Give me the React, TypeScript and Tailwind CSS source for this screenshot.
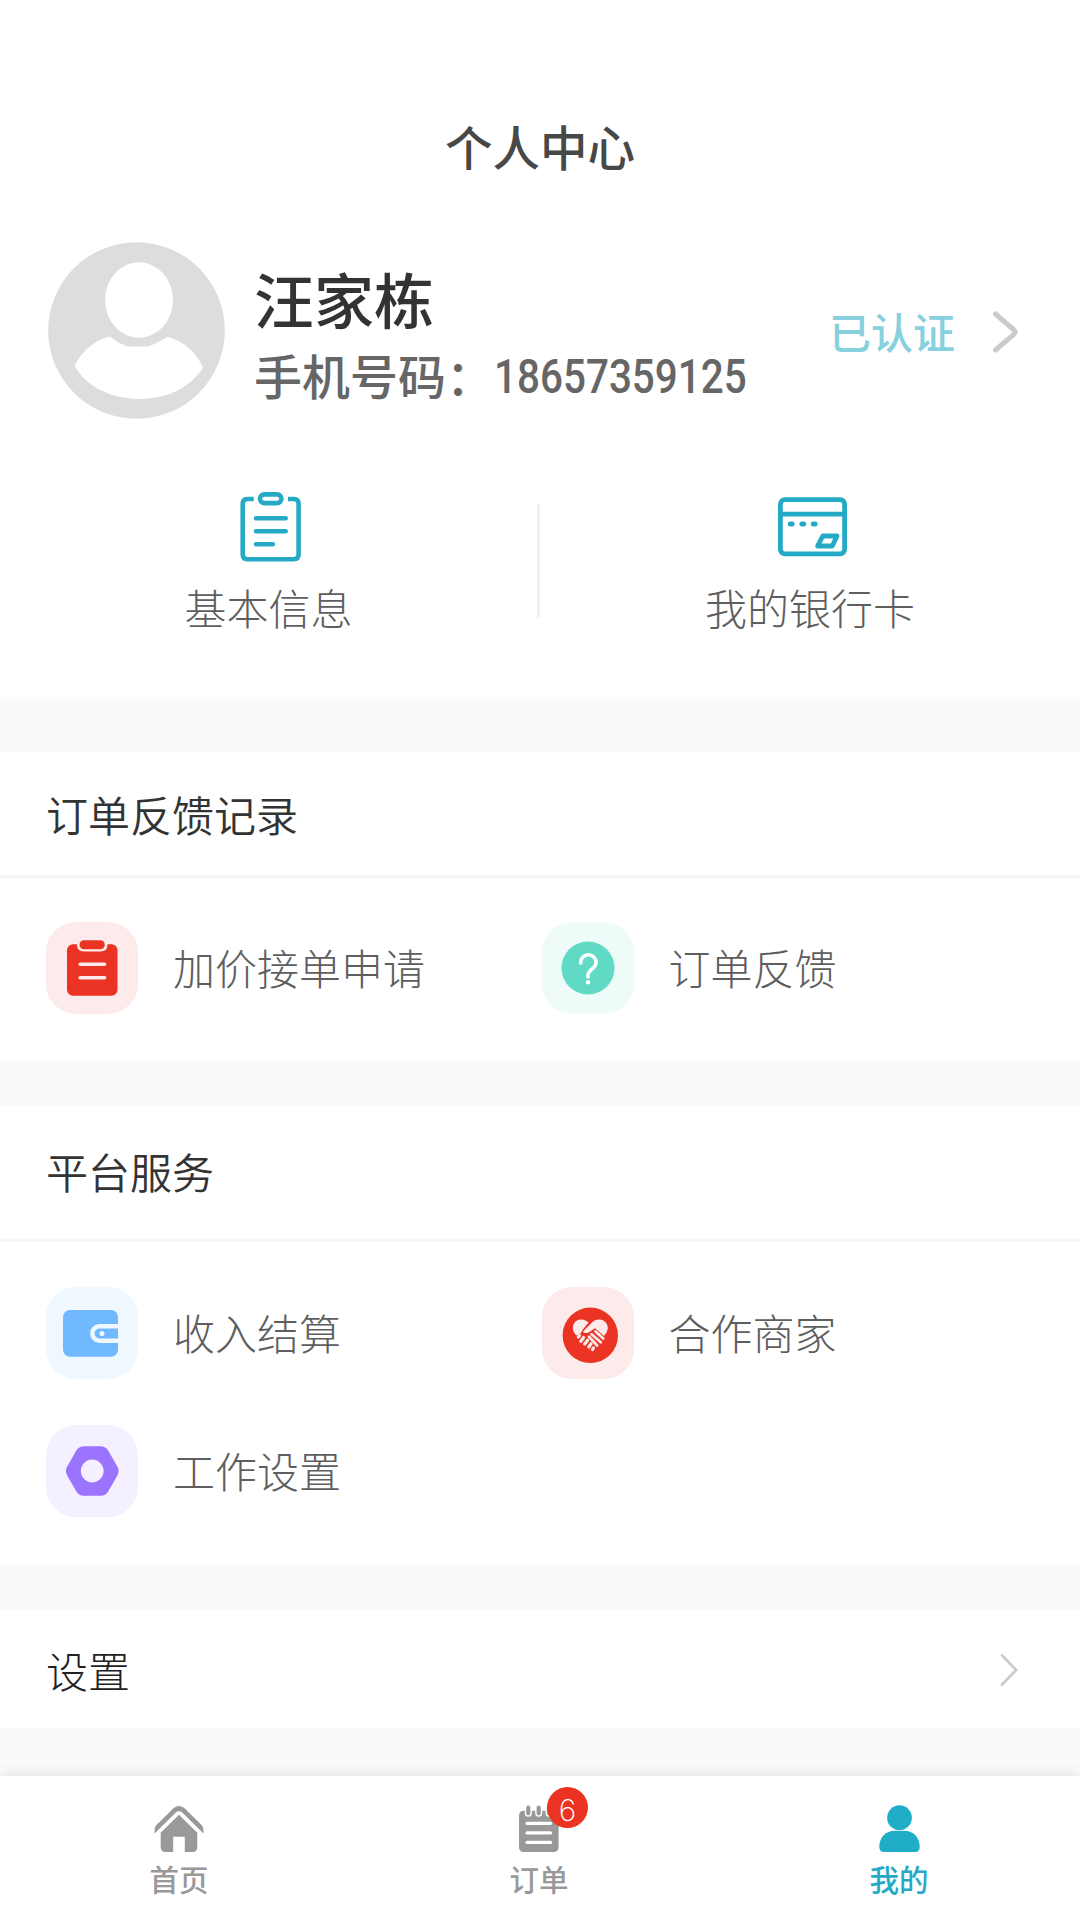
import React from "react";

interface ServiceItemProps {
  label: string;
  tone: string;
  children: React.ReactNode;
}

interface TabProps {
  label: string;
  active?: boolean;
  badge?: number;
  children: React.ReactNode;
}

const AvatarIcon = () => (
  <svg width="177" height="177" viewBox="0 0 177 177">
    <circle cx="88.5" cy="88.5" r="88.3" fill="#dddddd" />
    <ellipse cx="91" cy="58" rx="34" ry="37.7" fill="#fff" />
    <path
      d="M26.7 124C34 109 46 98 62 94.5C68 99.500 73 102 79.500 104.500H100C107 102 113 99 119.700 94.800C135 99 149 110 155 126C141 146 120 157 90 157C61 156 38 144 26.700 124Z"
      fill="#fff"
    />
  </svg>
);

const InfoIcon = () => (
  <svg width="61" height="70" viewBox="0 0 61 70" fill="none" stroke="#26a9c4" strokeWidth="4.600">
    <path d="M13.700 7H7.500Q2.700 7 2.700 12V62.200Q2.700 67.200 7.500 67.200H53.800Q58.600 67.200 58.600 62.200V12Q58.600 7 53.800 7H48" />
    <rect x="20" y="2.400" width="21.400" height="8.700" rx="4.350" />
    <path d="M16 26.300H45.700M16 39.200H45.700M16 52.300H32.800" strokeLinecap="round" />
  </svg>
);

const CardIcon = () => (
  <svg width="69" height="60" viewBox="0 0 69 60" fill="none" stroke="#23abc6" strokeWidth="4.800">
    <rect x="2.400" y="2.600" width="64.200" height="54.200" rx="4.500" />
    <path d="M2.400 17.200H66.600" />
    <path d="M12.300 27H14.100M23.900 27H25.700M35.300 27H37.100" strokeWidth="5" strokeLinecap="round" />
    <path d="M44.800 39H59L54.300 49H39.600Z" strokeLinejoin="round" />
  </svg>
);

const MarkupIcon = () => (
  <svg width="92" height="92" viewBox="0 0 92 92">
    <rect x="21" y="22.300" width="50.500" height="51.500" rx="6" fill="#eb3323" />
    <path d="M31 20V22.500Q31 29.500 38 29.500H54.500Q61.500 29.500 61.500 22.500V20" fill="#fdeaea" />
    <rect x="33.500" y="18.300" width="25.300" height="9" rx="4.500" fill="#eb3323" />
    <path d="M34.200 42.300H58.600M34.200 55.700H58.600" stroke="#fdeaea" strokeWidth="3.600" strokeLinecap="round" />
  </svg>
);

const QuestionIcon = () => (
  <svg width="92" height="92" viewBox="0 0 92 92">
    <circle cx="46" cy="46" r="26.500" fill="#60dac5" />
    <path
      d="M38.700 41V40.500A7.700 7.700 0 0 1 54.100 40.500C54.100 46.500 46 47.500 46 53V55"
      fill="none"
      stroke="#fff"
      strokeWidth="3.600"
      strokeLinecap="round"
    />
    <circle cx="46" cy="60.200" r="2.200" fill="#fff" />
  </svg>
);

const WalletIcon = () => (
  <svg width="92" height="92" viewBox="0 0 92 92">
    <rect x="17" y="23" width="55" height="46.700" rx="7" fill="#70b8ff" />
    <path d="M72 39.300H53.500A7.200 7.200 0 0 0 53.500 53.700H72" fill="none" stroke="#eff7ff" strokeWidth="4.500" />
    <circle cx="56" cy="46.500" r="2.500" fill="#eff7ff" />
  </svg>
);

const HandshakeIcon = () => (
  <svg width="92" height="92" viewBox="0 0 92 92">
    <circle cx="48.300" cy="48.300" r="27.700" fill="#eb3323" />
    <g fill="none" strokeLinecap="round" strokeLinejoin="round">
      <path
        d="M34.500 48.500C28 42 31 33 38.500 32.400C42 32.200 45 33.800 46.500 35.500L40.500 43Q39.700 46 37 47Z"
        fill="#fdeaea"
      />
      <path
        d="M41.200 44.200L51 34.500C55 31 62 32 64.500 36.500C66.800 40.500 66 44.500 62 49L53 41.300L47 45.200C44 46.500 41.500 46.500 41.200 44.200Z"
        fill="#fdeaea"
      />
      <path
        d="M37.500 48.400L36.300 50M41.500 50.500L38.800 54.200M45.600 53.200L42.700 57M49 56.800L46.800 60M51.500 60.800L50.600 62.500"
        stroke="#fdeaea"
        strokeWidth="3.200"
      />
      <path d="M53.500 44.500L61.300 51.500M49.500 47.200L58.800 55.300M47 49.800L55.200 58.500" stroke="#fdeaea" strokeWidth="2.700" />
    </g>
  </svg>
);

const NutIcon = () => (
  <svg width="92" height="92" viewBox="0 0 92 92">
    <path
      d="M29 46L38 30.200H54.500L63.500 46L54.500 61.800H38Z"
      fill="#9c73ff"
      stroke="#9c73ff"
      strokeWidth="18"
      strokeLinejoin="round"
    />
    <circle cx="46.200" cy="46" r="11.400" fill="#f4f0ff" />
  </svg>
);

const HomeIcon = () => (
  <svg width="50" height="48" viewBox="0 0 50 48" fill="#999">
    <path d="M.5 28.500V25Q.5 22 2.500 20.100L19.700 3Q25 -1.200 30.300 3L47.500 20.100Q49.500 22 49.500 25V28.500L28.200 7.600Q25 5 21.800 7.600Z" />
    <path d="M25 9.700L43.300 27.800V42Q43.300 47 38.300 47H30.800V31.700H19.200V47H11.700Q6.700 47 6.700 42V27.800Z" />
  </svg>
);

const OrderIcon = () => (
  <svg width="40" height="48" viewBox="0 0 40 48">
    <rect x="0" y="5.700" width="39.600" height="41.300" rx="4.500" fill="#999" />
    <path d="M9.300 2.700V8.300M19.700 2.700V8.300M30 2.700V8.300" stroke="#fff" strokeWidth="7" strokeLinecap="round" />
    <path d="M9.300 2.700V8.300M19.700 2.700V8.300M30 2.700V8.300" stroke="#999" strokeWidth="4.200" strokeLinecap="round" />
    <path d="M8 18.300H31.500M8 27.900H31.500M8 37.400H31.500" stroke="#fff" strokeWidth="3.300" strokeLinecap="round" />
  </svg>
);

const MineIcon = () => (
  <svg width="41" height="48" viewBox="0 0 41 48" fill="#1fadc8">
    <circle cx="20.500" cy="12.700" r="12.400" />
    <path d="M15.500 25.800H25.500C34 25.800 40.700 32.500 40.700 41.500Q40.700 47 36 47H5Q.3 47 .3 41.500C.3 32.500 7 25.800 15.500 25.800Z" />
  </svg>
);

const ServiceItem: React.FC<ServiceItemProps> = ({ label, tone, children }) => (
  <div className="flex w-[495.500px] items-center">
    <div className={`h-[92px] w-[92px] rounded-[30px] ${tone}`}>{children}</div>
    <span className="mb-[3px] ml-[35px] text-[42px] leading-none font-light text-[#5e5e5e]">{label}</span>
  </div>
);

const SectionTitle = ({ children }: { children: React.ReactNode }) => (
  <h2 className="pl-[46px] font-['Noto_Sans_CJK_SC_DemiLight','Noto_Sans_CJK_SC',sans-serif] text-[42px] leading-none font-[350] text-[#333]">
    {children}
  </h2>
);

const Tab: React.FC<TabProps> = ({ label, active, badge, children }) => (
  <div className="flex flex-1 flex-col items-center pt-[29px] pr-0.5">
    <div className="relative">
      {children}
      {badge !== undefined && (
        <span className="absolute -top-[18px] left-[28px] flex h-[41px] w-[41px] items-center justify-center rounded-full bg-[#eb3323] pt-1 font-['Inter'] text-[30px] leading-none font-extralight text-white">
          {badge}
        </span>
      )}
    </div>
    <span
      className={`mt-2.5 text-[29.500px] leading-[30px] font-medium ${active ? "text-[#26a9c4]" : "text-[#999]"}`}
    >
      {label}
    </span>
  </div>
);

const App: React.FC = () => {
  return (
    <div className="flex h-[1920px] w-[1080px] flex-col overflow-hidden bg-[#f8fafc] font-['Noto_Sans_CJK_SC',sans-serif]">
      {/* Profile */}
      <section className="h-[697px] bg-white">
        <h1 className="pt-[122px] text-center text-[47.500px] leading-[48px] font-medium text-[#484848]">个人中心</h1>
        <div className="mt-[72px] flex h-[177px] items-center pl-12">
          <AvatarIcon />
          <div className="ml-[29px] flex-1 pt-2">
            <div className="text-[60px] leading-[60px] font-medium text-[#333]">汪家栋</div>
            <div className="mt-[18px] flex items-center text-[48px] leading-[48px] font-medium whitespace-nowrap text-[#666]">
              <span>手机号码：</span>
              <span className="inline-block origin-left scale-x-[0.825] pt-[7px] font-['Roboto'] text-[49px]">
                18657359125
              </span>
            </div>
          </div>
          <span className="-ml-20 text-[42px] leading-none font-medium text-[#87d0de]">已认证</span>
          <svg className="mt-[3px] mr-[61px] ml-[37px]" width="27" height="42" viewBox="0 0 27 42" fill="none">
            <path
              d="M3.500 3L22 19Q24.500 21 22 23.300L3.500 39"
              stroke="#cbcbcb"
              strokeWidth="5"
              strokeLinecap="round"
            />
          </svg>
        </div>
        <div className="mt-[73px] flex text-[42px] leading-none font-light text-[#5e5e5e]">
          <div className="flex w-[537px] flex-col items-center">
            <div className="pl-1">
              <InfoIcon />
            </div>
            <span className="mt-6">基本信息</span>
          </div>
          <div className="mt-[11px] h-[115px] w-[3px] rounded bg-[#f2f2f2]" />
          <div className="flex w-[540px] flex-col items-center pt-[5px]">
            <div className="pl-1">
              <CardIcon />
            </div>
            <span className="mt-[29px]">我的银行卡</span>
          </div>
        </div>
      </section>

      {/* Order feedback */}
      <section className="mt-[55px] h-[308px] bg-white">
        <div className="flex h-[126px] items-center border-b-[3px] border-[#f6f6f6]">
          <SectionTitle>订单反馈记录</SectionTitle>
        </div>
        <div className="flex pt-11 pl-[46px]">
          <ServiceItem label="加价接单申请" tone="bg-[#fdeaea]">
            <MarkupIcon />
          </ServiceItem>
          <ServiceItem label="订单反馈" tone="bg-[#eefbf9]">
            <QuestionIcon />
          </ServiceItem>
        </div>
      </section>

      {/* Platform services */}
      <section className="mt-[46px] h-[458px] bg-white">
        <div className="flex h-[136px] items-center border-b-[3px] border-[#f6f6f6] pb-[3px]">
          <SectionTitle>平台服务</SectionTitle>
        </div>
        <div className="flex flex-wrap gap-y-[46px] pt-[45px] pl-[46px]">
          <ServiceItem label="收入结算" tone="bg-[#eff7ff]">
            <WalletIcon />
          </ServiceItem>
          <ServiceItem label="合作商家" tone="bg-[#fdeaea]">
            <HandshakeIcon />
          </ServiceItem>
          <ServiceItem label="工作设置" tone="bg-[#f4f0ff]">
            <NutIcon />
          </ServiceItem>
        </div>
      </section>

      <section className="mt-[46px] flex h-[118px] items-center justify-between bg-white pt-0.5">
        <span className="pl-[46px] text-[42px] leading-none font-light text-[#222]">设置</span>
        <svg className="mr-[61px]" width="20" height="36" viewBox="0 0 20 36" fill="none">
          <path d="M2.200 2.500L17.200 18L2.200 33.500" stroke="#cbcbcb" strokeWidth="2.700" />
        </svg>
      </section>

      {/* Tab bar */}
      <nav className="mt-12 flex h-[144px] bg-white shadow-[0_0_14px_rgba(0,0,0,0.12)]">
        <Tab label="首页">
          <HomeIcon />
        </Tab>
        <Tab label="订单" badge={6}>
          <OrderIcon />
        </Tab>
        <Tab label="我的" active>
          <MineIcon />
        </Tab>
      </nav>
    </div>
  );
};

export default App;
